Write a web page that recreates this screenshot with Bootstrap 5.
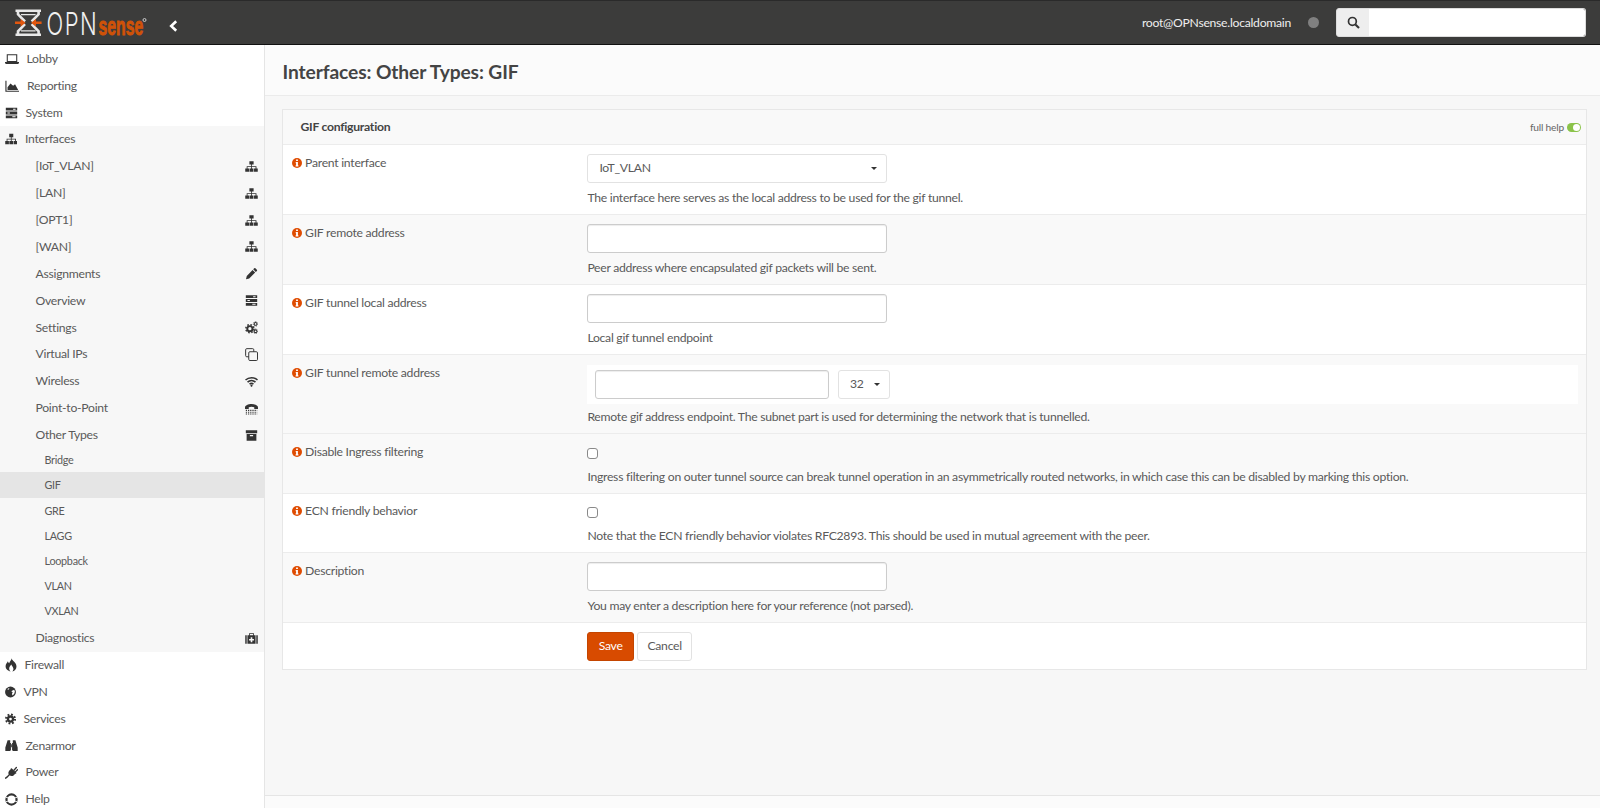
<!DOCTYPE html>
<html lang="en">
<head>
<meta charset="utf-8">
<title>Interfaces: Other Types: GIF</title>
<link href="https://cdn.jsdelivr.net/npm/bootstrap@5.3.0/dist/css/bootstrap.min.css" rel="stylesheet">
<style>
html,body{height:100%;overflow:hidden}
body{font-family:"Lato","Liberation Sans",sans-serif;font-size:12.2px;letter-spacing:-.27px;color:#5a5a5a;background:#f7f7f7;line-height:18px}
.opn-top{height:45px;background:#3c3c3b;border-top:1px solid #2a2a2a;border-bottom:1px solid #111;padding:0 14px 0 15px}
.opn-logo{display:block}
.opn-back{margin-left:18.5px;margin-top:6px}
.opn-user{color:#eee;font-size:12.2px}
.opn-dot{width:11px;height:11px;border-radius:50%;background:#808080;margin:0 17px 0 17px}
.opn-search{width:250px;height:29px;flex-wrap:nowrap}
.opn-search .input-group-text{width:34px;padding:0;justify-content:center;background:#eee;border:1px solid #ddd;border-radius:3px 0 0 3px;color:#333}
.opn-search .form-control{height:29px;min-height:29px;border:1px solid #ddd;border-left:0;border-radius:0 3px 3px 0;padding:0 8px}
.opn-body{height:763px}
.opn-side{width:265px;flex:none;background:#fff;border-right:1px solid #e5e5e5;overflow:hidden;padding-top:.6px}
.opn-item{height:26.8px;color:#5a5a5a;text-decoration:none;padding:0 8px 0 4.5px;white-space:nowrap}
.opn-item svg{flex:none;color:#333;margin-right:8px}
.opn-group{background:#f7f7f7}
.opn-sub{height:26.9px;color:#5a5a5a;text-decoration:none;padding:0 6.5px 0 35.5px}
.opn-sub svg{flex:none;color:#333}
.opn-leaf{height:25.2px;color:#5a5a5a;text-decoration:none;padding-left:44.5px;font-size:10.8px}
.opn-leaf.opn-first{height:24.4px}
.opn-leaf.opn-on{background:#e5e5e5;height:26px}
.opn-pull{margin-top:-1px}
.opn-gap{height:1px}
.opn-main{min-width:0;background:#f7f7f7}
.opn-head{height:50.5px;background:#fbfbfb;border-bottom:1px solid #ebebeb;padding:4px 0 0 17.5px}
.opn-head h1{font-size:19.2px;font-weight:700;margin:0;color:#444;letter-spacing:-.1px}
.opn-panel{margin:13.5px 13.5px 0 16.8px;background:#fff;border:1px solid #e7e7e7;flex:none}
.opn-cap{height:35px;background:#f9f9f9;border-bottom:1px solid #ececec;padding:0 5px 0 17.7px}
.opn-cap strong{color:#444;font-size:12.2px}
.opn-help{font-size:10.2px;color:#666;margin-right:2.5px;letter-spacing:-.2px}
.opn-switch{width:14px;height:9px;border-radius:5px;background:#8bc34a;position:relative;display:block}
.opn-switch::after{content:"";position:absolute;right:1px;top:1px;width:7px;height:7px;border-radius:50%;background:#fff}
.opn-line{border-bottom:1px solid #ececec;padding:9px 9px 6.9px 0}
.opn-line.opn-tint{background:#f9f9f9}
.opn-line:last-child{border-bottom:0}
.opn-label{width:304.6px;flex:none;padding-left:8.8px;color:#5a5a5a}
.opn-label svg{margin-right:3.5px;vertical-align:-1px}
.opn-field{min-width:0;flex:1 1 auto}
.opn-input{width:300px;height:29px;min-height:29px;padding:0 10px;border:1px solid #ccc;border-radius:3px;box-shadow:inset 0 1px 1px rgba(0,0,0,.075);font-size:12.2px}
.opn-pick{width:300px;height:29px;padding:0 9px 0 11px;background:#fff;border:1px solid #e2e2e2;border-radius:3px;color:#5a5a5a;font-size:12.2px;letter-spacing:-.27px}
.opn-pick::after{color:#333;margin:0;border-top-width:.3em;border-right-width:.3em;border-left-width:.3em}
.opn-pair{background:#fff;padding:5px 0 5px 8px;margin-top:1.2px;margin-right:-1px;width:990.5px}
.opn-pair .opn-input{width:234px}
.opn-pair .opn-pick{width:52px;margin-left:8.5px}
.opn-note{margin-top:6px;color:#5a5a5a}
.opn-pair + .opn-note{margin-top:4.4px}
.opn-tick{width:11px;height:11px;margin:5px 0 0;border:1px solid #888;border-radius:2px;display:block;float:none}
.opn-tick + .opn-note{margin-top:9px}
.opn-t1{padding-top:9px;padding-bottom:6.8px}
.opn-t2{padding-top:8.5px;padding-bottom:6.5px}
.opn-btn-save{width:46.5px;height:29px;padding:0;background:#d84b00;border:1px solid #c44500;color:#fff;font-size:12.2px;letter-spacing:-.27px;border-radius:3px}
.opn-btn-cancel{width:55.5px;height:29px;padding:0;background:#fff;border:1px solid #e2e2e2;color:#5a5a5a;font-size:12.2px;letter-spacing:-.27px;border-radius:3px;margin-left:3px}
.opn-line.opn-end{padding-bottom:8.4px}
.opn-foot{height:13px;border-top:1px solid #e5e5e5;background:#fbfbfb;flex:none}
</style>
</head>
<body>
<svg width="0" height="0" class="position-absolute" aria-hidden="true">
<defs>
<symbol id="i-laptop" viewBox="0 0 16 16"><path d="M2.6 3.2h10.8v7.6H2.6z" fill="none" stroke="currentColor" stroke-width="1.2"/><path d="M0 11.4h16v1.2l-1 1H1l-1-1z" fill="currentColor"/></symbol>
<symbol id="i-area" viewBox="0 0 16 16"><path d="M.8 2v12h15" fill="none" stroke="currentColor" stroke-width="1.3"/><path d="M2.6 12.6V9.4L6 5.2l3 2.4 2.2-1.6 3.6 6.6z" fill="currentColor"/></symbol>
<symbol id="i-bars" viewBox="0 0 16 16"><path fill="currentColor" fill-rule="evenodd" d="M1 1.600h14v3.400H1zm9 1.100v1.200h3V2.700zM1 6.300h14v3.400H1zm2 1.100v1.200h3V7.400zM1 11h14v3.400H1zm8 1.100v1.200h4v-1.200z"/></symbol>
<symbol id="i-sitemap" viewBox="0 0 16 16"><path fill="currentColor" d="M5.4 1.4h5.200v4.200H8.500V7.700h5.600v2.800h1.600v4.100h-4.600v-4.100h1.900V8.700H8.500v1.800h1.900v4.100H5.600v-4.100h1.900V8.700H3.100v1.800H5v4.100H.3v-4.100h1.800V7.700h5.400V5.600H5.400z"/></symbol>
<symbol id="i-pencil" viewBox="0 0 16 16"><path fill="currentColor" d="M11.400 1.600a1 1 0 0 1 1.400 0l1.800 1.800a1 1 0 0 1 0 1.400l-1.300 1.300-3.200-3.200zM9.300 3.700l3.200 3.200-7.300 7.300-4 1 1-4z"/></symbol>
<symbol id="i-cogs" viewBox="0 0 16 16"><g fill="none" stroke="currentColor"><circle cx="6" cy="9.500" r="3.200" stroke-width="2.400"/><circle cx="6" cy="9.500" r="5" stroke-width="1.800" stroke-dasharray="2 1.930"/><circle cx="13" cy="3.600" r="1.700" stroke-width="1.300"/><circle cx="13" cy="3.600" r="2.800" stroke-width="1" stroke-dasharray="1 1.200"/><circle cx="13" cy="12.600" r="1.700" stroke-width="1.300"/><circle cx="13" cy="12.600" r="2.800" stroke-width="1" stroke-dasharray="1 1.200"/></g></symbol>
<symbol id="i-clone" viewBox="0 0 16 16"><rect x=".8" y=".8" width="10" height="10" rx="1.400" fill="none" stroke="currentColor" stroke-width="1.200"/><rect x="4.600" y="4.600" width="10.800" height="10.800" rx="1.400" fill="#f7f7f7" stroke="currentColor" stroke-width="1.200"/></symbol>
<symbol id="i-wifi" viewBox="0 0 16 16"><g fill="none" stroke="currentColor" stroke-width="1.900"><path d="M.6 6.200c4.100-3.900 10.700-3.900 14.800 0"/><path d="M3.100 8.800c2.800-2.500 7-2.500 9.800 0"/><path d="M5.600 11.200c1.400-1.100 3.400-1.100 4.800 0"/></g><path fill="currentColor" d="M8 11.800l1.600 1.500L8 14.800l-1.600-1.500z"/></symbol>
<symbol id="i-tty" viewBox="0 0 16 16"><path fill="currentColor" d="M0 6.800C0 1 16 1 16 6.800v1.700h-4.600V6.600c-1.900-.9-4.900-.9-6.800 0v1.900H0z"/><path stroke="currentColor" stroke-width="1.400" stroke-dasharray="1.500 1.200" d="M1 10.300h14M1 12.600h14M1 14.800h14"/></symbol>
<symbol id="i-archive" viewBox="0 0 16 16"><path fill="currentColor" fill-rule="evenodd" d="M1 1.500h14v3.800H1zM2 6.200h12v8.300H2zm4 1.300v1.400h4V7.500z"/></symbol>
<symbol id="i-medkit" viewBox="0 0 16 16"><path fill="currentColor" fill-rule="evenodd" d="M5 1.500h6v2.500h2v10.500H3V4h2zm1 1v1.500h4V2.500zM7 6.500v2H5v2h2v2h2v-2h2v-2H9v-2zM.3 4h1.800v10.500H.3zM13.900 4h1.800v10.500h-1.800z"/></symbol>
<symbol id="i-fire" viewBox="1 0 14 16"><path fill="currentColor" fill-rule="evenodd" d="M8.500.2c.8 3 5.900 4.900 5.900 9.500 0 2.900-2 5.300-5.200 5.900 1.300-1 1.900-2.300 1.500-3.900-.4-1.700-1.900-2.500-2.200-4.300-1 1-2.600 2.600-2.600 4.700 0 1.500.7 2.700 1.700 3.500-3.200-.5-5.900-2.900-5.900-6.100 0-2.500 1.700-3.900 2.700-5.800.3 1.100.7 1.900 1.500 2.300.4-2.100 2.900-3.400 2.600-5.800z"/></symbol>
<symbol id="i-globe" viewBox=".5 .5 15 15"><circle cx="8" cy="8" r="7.400" fill="currentColor"/><path fill="#fff" d="M10 6.200l3-1.300 1 2.500-1 3.400-2.400 2.100-.6-2.600 1-1.800-1.800-1.300zM4.500 3.300l2-.5-.6 1.700-2 .5z"/></symbol>
<symbol id="i-cog" viewBox="0 0 16 16"><g fill="none" stroke="currentColor"><circle cx="8" cy="8" r="3.700" stroke-width="3.400"/><circle cx="8" cy="8" r="6.600" stroke-width="2.800" stroke-dasharray="2.600 2.580"/></g></symbol>
<symbol id="i-bino" viewBox="0 1 16 14"><path fill="currentColor" d="M3.200 1.500h3.200v3.300h.9v8.900H6.600v1H.4v-4.200zM12.800 1.500H9.600v3.300h-.9v8.900h.7v1h6.200v-4.200zM7.500 6.500h1v3.500h-1z"/></symbol>
<symbol id="i-plug" viewBox="0 0 16 16"><g fill="none" stroke="currentColor" stroke-linecap="round"><path d="M11 5.200l3-3.400M12.800 7.200l2.600-2.600" stroke-width="1.600"/><path d="M5 11.200c-1.800 1.700-2.800 2.800-4.300 3.800" stroke-width="1.700"/></g><path fill="currentColor" d="M8.200 2.800l6 5.700-.9 1-1 .1c-1.400 3-4.600 3.600-7 1.800-2-2.100-1.500-5.400 1.700-7.500l.1-.9z"/></symbol>
<symbol id="i-ring" viewBox="0 0 16 16"><circle cx="8" cy="8" r="6.200" fill="none" stroke="currentColor" stroke-width="2.800"/><path stroke="#fff" stroke-width="1.100" d="M1 5.200l4 1.200M15 5.200l-4 1.200M1 10.800l4-1.200M15 10.800l-4-1.200"/></symbol>
<symbol id="i-info" viewBox="0 0 10 10"><circle cx="5" cy="5" r="5" fill="#df4c02"/><path fill="#fff" d="M4.100 1.600h1.800v1.500H4.100zM3.700 4h2.200v3.200h.5v1.300H3.600V7.200h.5V5.200h-.4z"/></symbol>
</defs>
</svg>

<nav class="opn-top d-flex align-items-center">
  <svg class="opn-logo" width="135" height="43" viewBox="0 -6.500 135 43" role="img" aria-label="OPNsense">
    <g fill="none" stroke="#e8e8e8" stroke-width="2.600">
      <path d="M.5 3.300h25.500M.5 27.300h25.500M3 3.400v3.400l7 7.200M23.600 3.400v3.400l-7 7.200M3 27.200v-3.400l7-7.200M23.600 27.200v-3.400l-7-7.200"/>
      <path d="M6 7.200h14.600M6 23.400h14.600" stroke-width="1.200"/>
    </g>
    <path fill="#e2570f" d="M0 14.100h5.600v-2.500l5 3.700-5 3.700v-2.500H0zM26.600 14.100H21v-2.500l-5 3.700 5 3.700v-2.500h5.600z"/>
    <text transform="translate(31.500 27) scale(1 1.430)" font-family="Inter,'Liberation Sans',sans-serif" font-weight="300" font-size="22" letter-spacing="1.500" fill="#f0f0f0">OPN</text>
    <text transform="translate(83.500 27) scale(1.130 1.900)" font-family="'Liberation Sans',sans-serif" font-weight="700" font-size="14" letter-spacing="0" fill="#cf5208" stroke="#cf5208" stroke-width=".5">sense</text>
    <circle cx="129.500" cy="12.500" r="1.500" fill="none" stroke="#ccc"/>
  </svg>
  <svg class="opn-back" width="9" height="12" viewBox="0 0 9 12" aria-hidden="true"><path d="M7.200 1.200 2.200 6l5 4.800" fill="none" stroke="#fff" stroke-width="2.600"/></svg>
  <span class="opn-user ms-auto">root@OPNsense.localdomain</span>
  <span class="opn-dot"></span>
  <div class="input-group opn-search">
    <span class="input-group-text"><svg width="13" height="13" viewBox="0 0 13 13" aria-hidden="true"><circle cx="5.400" cy="5.400" r="3.900" fill="none" stroke="#333" stroke-width="1.700"/><path d="M8.400 8.400l3.600 3.600" stroke="#333" stroke-width="2.100"/></svg></span>
    <input class="form-control" type="text" aria-label="Search">
  </div>
</nav>

<div class="opn-body d-flex">
  <aside class="opn-side">
    <a class="opn-item d-flex align-items-center" href="#"><svg width="14" height="14"><use href="#i-laptop"/></svg>Lobby</a>
    <a class="opn-item d-flex align-items-center" href="#"><svg width="14.500" height="14"><use href="#i-area"/></svg>Reporting</a>
    <a class="opn-item d-flex align-items-center" href="#"><svg width="13" height="14"><use href="#i-bars"/></svg>System</a>
    <div class="opn-group">
      <a class="opn-item d-flex align-items-center" href="#"><svg width="12.500" height="14"><use href="#i-sitemap"/></svg>Interfaces</a>
      <a class="opn-sub d-flex align-items-center justify-content-between" href="#">[IoT_VLAN]<svg width="13" height="13"><use href="#i-sitemap"/></svg></a>
      <a class="opn-sub d-flex align-items-center justify-content-between" href="#">[LAN]<svg width="13" height="13"><use href="#i-sitemap"/></svg></a>
      <a class="opn-sub d-flex align-items-center justify-content-between" href="#">[OPT1]<svg width="13" height="13"><use href="#i-sitemap"/></svg></a>
      <a class="opn-sub d-flex align-items-center justify-content-between" href="#">[WAN]<svg width="13" height="13"><use href="#i-sitemap"/></svg></a>
      <a class="opn-sub d-flex align-items-center justify-content-between" href="#">Assignments<svg width="13" height="13"><use href="#i-pencil"/></svg></a>
      <a class="opn-sub d-flex align-items-center justify-content-between" href="#">Overview<svg width="13" height="13"><use href="#i-bars"/></svg></a>
      <a class="opn-sub d-flex align-items-center justify-content-between" href="#">Settings<svg width="13" height="13"><use href="#i-cogs"/></svg></a>
      <a class="opn-sub d-flex align-items-center justify-content-between" href="#">Virtual IPs<svg width="13" height="13"><use href="#i-clone"/></svg></a>
      <a class="opn-sub d-flex align-items-center justify-content-between" href="#">Wireless<svg width="13" height="13"><use href="#i-wifi"/></svg></a>
      <a class="opn-sub d-flex align-items-center justify-content-between" href="#">Point-to-Point<svg width="13" height="13"><use href="#i-tty"/></svg></a>
      <a class="opn-sub d-flex align-items-center justify-content-between" href="#">Other Types<svg width="13" height="13"><use href="#i-archive"/></svg></a>
      <a class="opn-leaf opn-first opn-pull d-flex align-items-center" href="#">Bridge</a>
      <a class="opn-leaf opn-on d-flex align-items-center" href="#">GIF</a>
      <a class="opn-leaf d-flex align-items-center" href="#">GRE</a>
      <a class="opn-leaf d-flex align-items-center" href="#">LAGG</a>
      <a class="opn-leaf d-flex align-items-center" href="#">Loopback</a>
      <a class="opn-leaf d-flex align-items-center" href="#">VLAN</a>
      <a class="opn-leaf d-flex align-items-center" href="#">VXLAN</a>
      <div class="opn-gap"></div>
      <a class="opn-sub d-flex align-items-center justify-content-between" href="#">Diagnostics<svg width="13" height="13"><use href="#i-medkit"/></svg></a>
    </div>
    <a class="opn-item d-flex align-items-center" href="#"><svg width="12" height="14"><use href="#i-fire"/></svg>Firewall</a>
    <a class="opn-item d-flex align-items-center" href="#"><svg width="11" height="12"><use href="#i-globe"/></svg>VPN</a>
    <a class="opn-item d-flex align-items-center" href="#"><svg width="11" height="12"><use href="#i-cog"/></svg>Services</a>
    <a class="opn-item d-flex align-items-center" href="#"><svg width="13" height="13"><use href="#i-bino"/></svg>Zenarmor</a>
    <a class="opn-item d-flex align-items-center" href="#"><svg width="13" height="13"><use href="#i-plug"/></svg>Power</a>
    <a class="opn-item d-flex align-items-center" href="#"><svg width="13" height="13"><use href="#i-ring"/></svg>Help</a>
  </aside>

  <main class="opn-main flex-grow-1 d-flex flex-column">
    <header class="opn-head d-flex align-items-center"><h1>Interfaces: Other Types: GIF</h1></header>
    <section class="opn-panel">
      <div class="opn-cap d-flex align-items-center">
        <strong>GIF configuration</strong>
        <span class="opn-help ms-auto">full help</span><span class="opn-switch"></span>
      </div>
      <div class="opn-line d-flex">
        <label class="opn-label"><svg width="10" height="10"><use href="#i-info"/></svg>Parent interface</label>
        <div class="opn-field">
          <button type="button" class="opn-pick btn dropdown-toggle d-flex align-items-center justify-content-between">IoT_VLAN</button>
          <div class="opn-note">The interface here serves as the local address to be used for the gif tunnel.</div>
        </div>
      </div>
      <div class="opn-line opn-tint d-flex">
        <label class="opn-label"><svg width="10" height="10"><use href="#i-info"/></svg>GIF remote address</label>
        <div class="opn-field">
          <input class="form-control opn-input" type="text" aria-label="GIF remote address">
          <div class="opn-note">Peer address where encapsulated gif packets will be sent.</div>
        </div>
      </div>
      <div class="opn-line d-flex">
        <label class="opn-label"><svg width="10" height="10"><use href="#i-info"/></svg>GIF tunnel local address</label>
        <div class="opn-field">
          <input class="form-control opn-input" type="text" aria-label="GIF tunnel local address">
          <div class="opn-note">Local gif tunnel endpoint</div>
        </div>
      </div>
      <div class="opn-line opn-tint d-flex">
        <label class="opn-label"><svg width="10" height="10"><use href="#i-info"/></svg>GIF tunnel remote address</label>
        <div class="opn-field">
          <div class="opn-pair d-flex">
            <input class="form-control opn-input" type="text" aria-label="GIF tunnel remote address">
            <button type="button" class="opn-pick btn dropdown-toggle d-flex align-items-center justify-content-between">32</button>
          </div>
          <div class="opn-note">Remote gif address endpoint. The subnet part is used for determining the network that is tunnelled.</div>
        </div>
      </div>
      <div class="opn-line opn-tint opn-t1 d-flex">
        <label class="opn-label"><svg width="10" height="10"><use href="#i-info"/></svg>Disable Ingress filtering</label>
        <div class="opn-field">
          <input class="form-check-input opn-tick" type="checkbox" aria-label="Disable Ingress filtering">
          <div class="opn-note">Ingress filtering on outer tunnel source can break tunnel operation in an asymmetrically routed networks, in which case this can be disabled by marking this option.</div>
        </div>
      </div>
      <div class="opn-line opn-t2 d-flex">
        <label class="opn-label"><svg width="10" height="10"><use href="#i-info"/></svg>ECN friendly behavior</label>
        <div class="opn-field">
          <input class="form-check-input opn-tick" type="checkbox" aria-label="ECN friendly behavior">
          <div class="opn-note">Note that the ECN friendly behavior violates RFC2893. This should be used in mutual agreement with the peer.</div>
        </div>
      </div>
      <div class="opn-line opn-tint d-flex">
        <label class="opn-label"><svg width="10" height="10"><use href="#i-info"/></svg>Description</label>
        <div class="opn-field">
          <input class="form-control opn-input" type="text" aria-label="Description">
          <div class="opn-note">You may enter a description here for your reference (not parsed).</div>
        </div>
      </div>
      <div class="opn-line opn-end d-flex">
        <div class="opn-label"></div>
        <div class="opn-field d-flex">
          <button type="button" class="btn opn-btn-save">Save</button>
          <button type="button" class="btn opn-btn-cancel">Cancel</button>
        </div>
      </div>
    </section>
    <footer class="opn-foot mt-auto"></footer>
  </main>
</div>
<script src="https://cdn.jsdelivr.net/npm/bootstrap@5.3.0/dist/js/bootstrap.bundle.min.js"></script>
</body>
</html>
